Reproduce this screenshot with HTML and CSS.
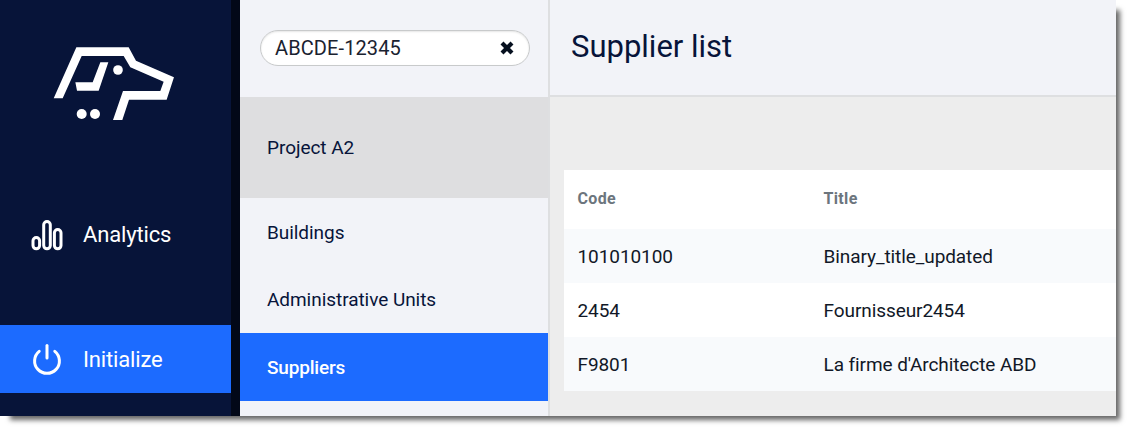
FILE: index.html
```html
<!DOCTYPE html>
<html lang="en">
<head>
    <meta charset="UTF-8">
    <meta name="viewport" content="width=device-width, initial-scale=1.0">
    <title>Supplier list</title>
    <link rel="stylesheet" href="styles.css">
</head>
<body>
    <div class="app">
        <nav class="sidebar">
            <svg class="logo" viewBox="40 36 366 220" fill="#fff">
                <path d="M42 190L110 37H267L289 77L403 127L381 194H268L248 255H220L250 168H362L372 140L272 97L252 63H126L69 190Z"/>
                <path d="M182 82H206L177 167H112L107 142H159Z"/>
                <circle cx="235" cy="105" r="14.5"/>
                <circle cx="126" cy="237" r="15"/>
                <circle cx="166" cy="237" r="15"/>
            </svg>
            <a class="nav-item">
                <svg class="nav-icon bars" viewBox="0 0 32 32" fill="none" stroke="#fff" stroke-width="3">
                    <rect x="2" y="18.5" width="6.6" height="11.3" rx="3.3"/>
                    <rect x="12.7" y="2.5" width="6.6" height="27.3" rx="3.3"/>
                    <rect x="23.4" y="10.5" width="6.6" height="19.3" rx="3.3"/>
                </svg>
                <span>Analytics</span>
            </a>
            <a class="nav-item active">
                <svg class="nav-icon" viewBox="0 0 32 32" fill="none" stroke="#fff" stroke-width="3" stroke-linecap="round">
                    <path d="M16 2.5V15"/>
                    <path d="M8.2 8.3A12.4 12.4 0 1 0 23.8 8.3"/>
                </svg>
                <span>Initialize</span>
            </a>
        </nav>

        <aside class="menu">
            <div class="search">
                <div class="search-box">
                    <span>ABCDE-12345</span>
                    <svg class="clear" viewBox="0 0 14 14" stroke="#06101f" stroke-width="4.2">
                        <path d="M2 2L12 12M12 2L2 12"/>
                    </svg>
                </div>
            </div>
            <div class="project">Project A2</div>
            <a class="menu-item">Buildings</a>
            <a class="menu-item">Administrative Units</a>
            <a class="menu-item selected">Suppliers</a>
        </aside>

        <main class="content">
            <header class="page-header">
                <h1>Supplier list</h1>
            </header>
            <table class="suppliers">
                <thead>
                    <tr><th class="col-code">Code</th><th>Title</th></tr>
                </thead>
                <tbody>
                    <tr><td>101010100</td><td>Binary_title_updated</td></tr>
                    <tr><td>2454</td><td>Fournisseur2454</td></tr>
                    <tr><td>F9801</td><td>La firme d'Architecte ABD</td></tr>
                </tbody>
            </table>
        </main>
    </div>
</body>
</html>
```
FILE: styles.css
```css
* { box-sizing: border-box; }
body { margin: 0; height: 431px; background: #fff; color: #07143a; font-family: Roboto, sans-serif; font-size: 19px; }
.app { display: flex; width: 1116px; height: 416px; box-shadow: 7px 7px 5px -3px rgba(0, 0, 0, 0.6); }

.sidebar { width: 240px; background: #071439; border-right: 9px solid #020818; color: #fff; }
.logo { display: block; width: 122px; height: 73.3px; margin: 47px 0 0 53.3px; }
.nav-item { display: flex; align-items: center; gap: 20px; height: 68px; padding-left: 31px; font-size: 22px; letter-spacing: -0.15px; }
.logo + .nav-item { margin: 80px 0 57px; }
.nav-item.active { background: #1c6bff; }
.nav-icon { width: 32px; height: 32px; }
.nav-icon.bars { margin-top: 2px; }

.menu { width: 310px; background: #f2f3f8; border-right: 2px solid #dedfe1; letter-spacing: -0.05px; }
.search { height: 97px; padding: 30px 18px 0 20px; }
.search-box { display: flex; align-items: center; justify-content: space-between; height: 36px; padding: 0 15px 0 14px; border: 1px solid #c8cacb; border-radius: 18px; background: #fff; box-shadow: inset 0 1px 2px rgba(0, 0, 0, 0.1); font-size: 20px; letter-spacing: 0.1px; color: #1a2230; }
.clear { width: 14px; height: 14px; }
.project { height: 101px; padding-left: 27px; background: #dedee0; line-height: 101px; }
.menu-item { display: block; height: 67px; padding-left: 27px; line-height: 69px; }
.menu-item + .menu-item { height: 68px; }
.menu-item.selected { background: #1c6bff; color: #fff; font-weight: 500; letter-spacing: -0.2px; }

.content { flex: 1; background: #ededed; }
.page-header { height: 97px; padding-left: 21px; background: #f2f3f8; border-bottom: 2px solid #dedfe1; }
h1 { margin: 0; font-size: 31px; font-weight: 400; line-height: 93px; letter-spacing: 0; }
.suppliers { width: 552px; margin: 73px 0 0 14px; border-collapse: collapse; background: #fff; color: #111827; table-layout: fixed; }
th, td { padding: 0 0 0 13.5px; text-align: left; }
th { height: 59px; padding-bottom: 2px; color: #6c757d; font-size: 16px; font-weight: 700; letter-spacing: 0.35px; }
td { height: 54px; letter-spacing: -0.08px; }
.col-code { width: 246px; }
tbody tr:nth-child(odd) { background: #f8fafc; }
```
